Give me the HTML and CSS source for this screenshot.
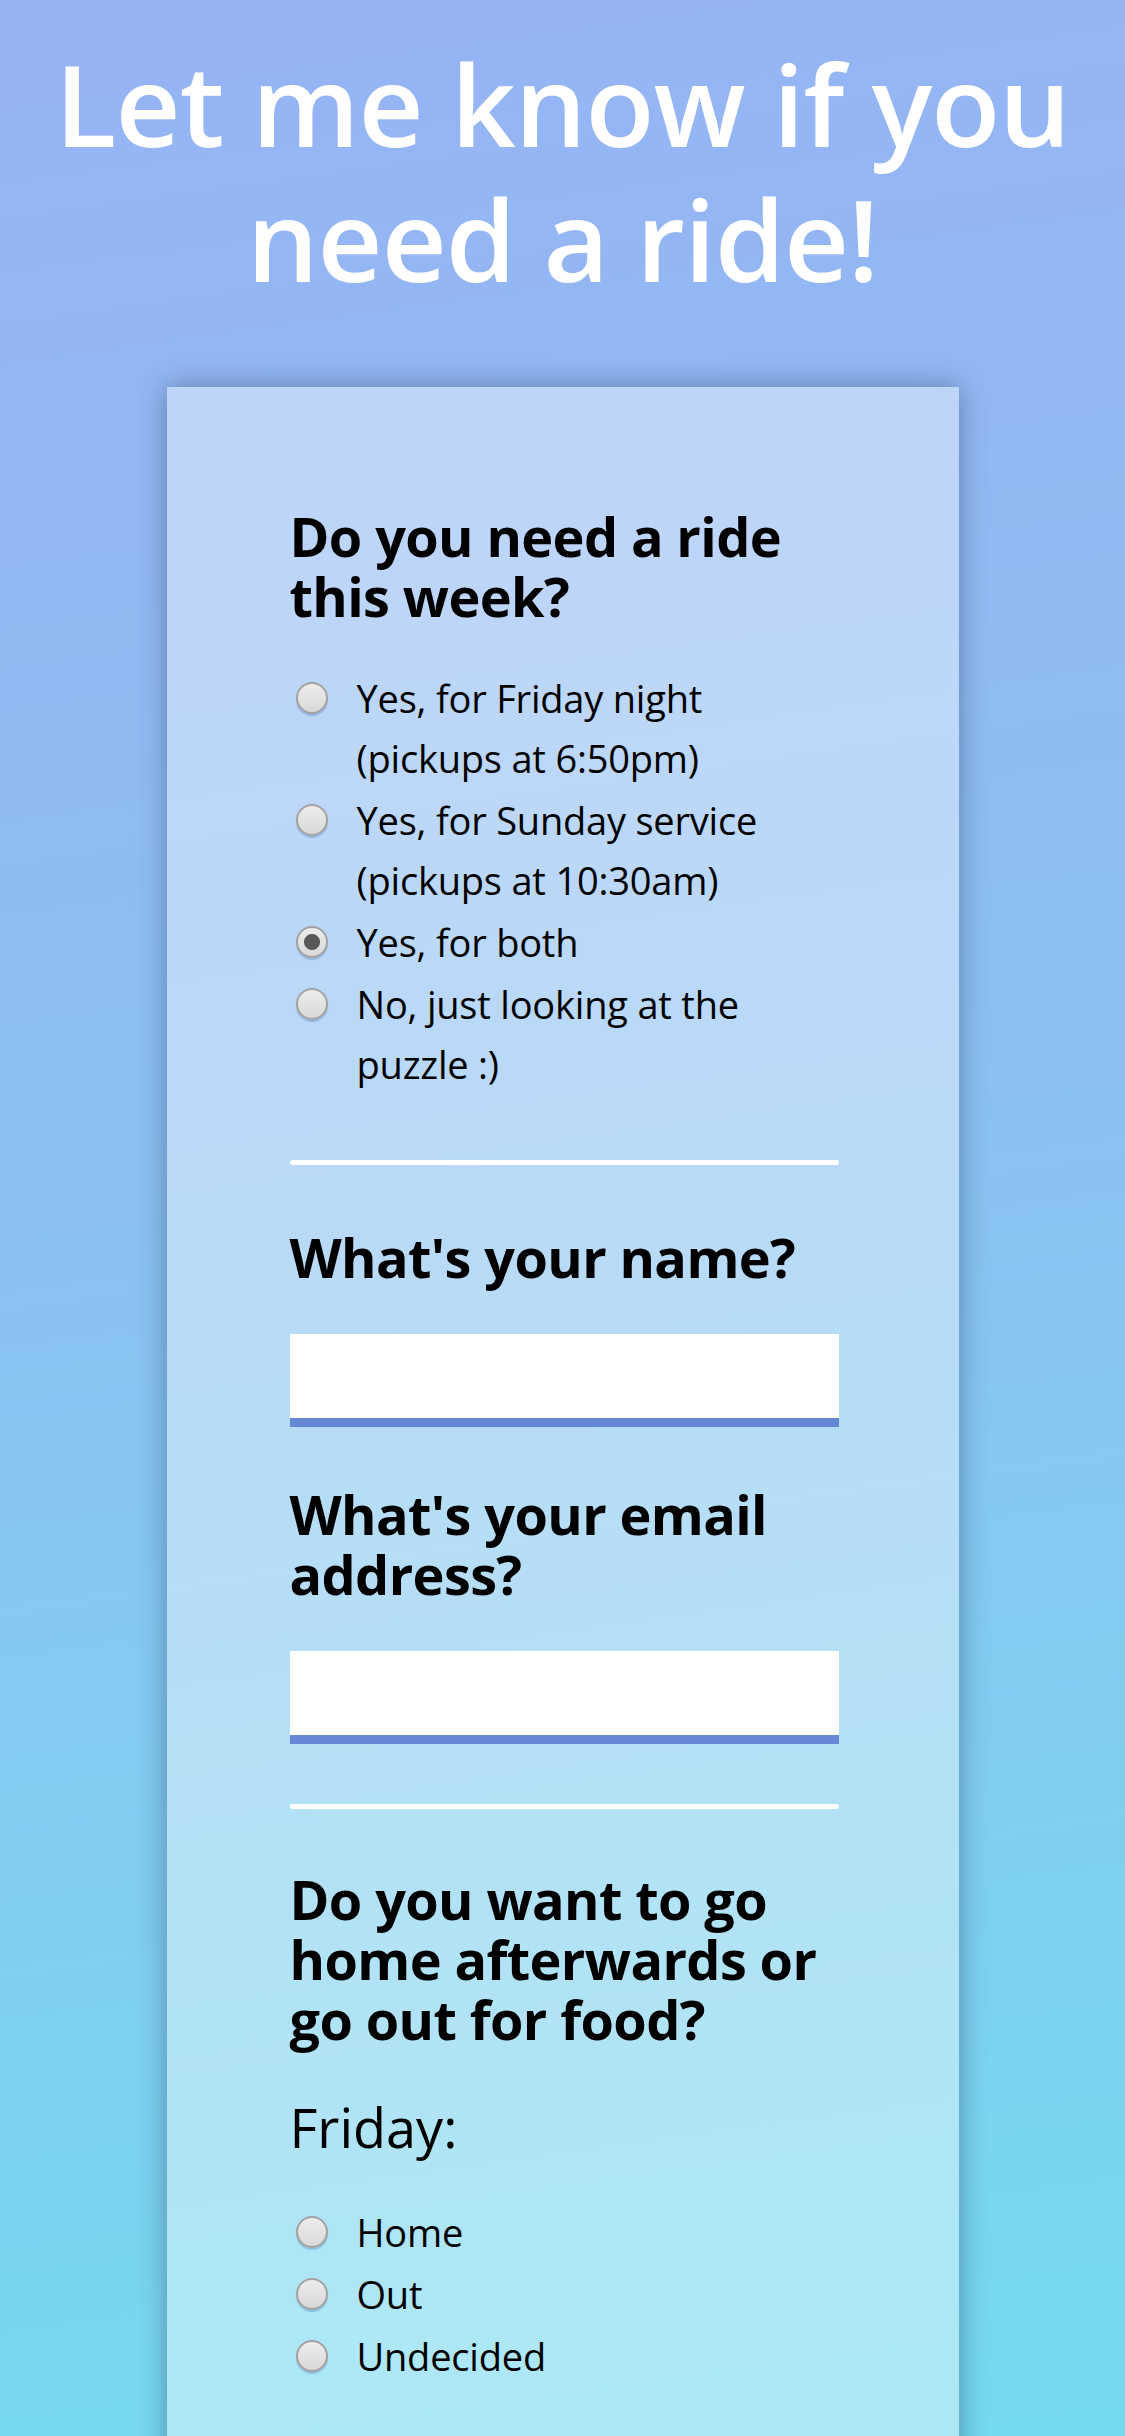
FILE: index.html
```html
<!DOCTYPE html>
<html lang="en">
<head>
<meta charset="utf-8">
<title>Ride form</title>
<link rel="stylesheet" href="styles.css">
</head>
<body>
<h1 class="title">Let me know if you need a ride!</h1>
<form class="card">
  <h2 class="question">Do you need a ride this week?</h2>
  <div class="options">
    <label class="option"><input type="radio" name="ride" class="radio"><span class="option-text">Yes, for Friday night (pickups at 6:50pm)</span></label>
    <label class="option"><input type="radio" name="ride" class="radio"><span class="option-text">Yes, for Sunday service (pickups at 10:30am)</span></label>
    <label class="option"><input type="radio" name="ride" class="radio" checked><span class="option-text">Yes, for both</span></label>
    <label class="option"><input type="radio" name="ride" class="radio"><span class="option-text">No, just looking at the puzzle :)</span></label>
  </div>
  <hr class="divider">
  <h2 class="question q-name">What's your name?</h2>
  <input type="text" class="field" aria-label="Name">
  <h2 class="question q-email">What's your email address?</h2>
  <input type="email" class="field" aria-label="Email">
  <hr class="divider divider-2">
  <h2 class="question q-food">Do you want to go home afterwards or go out for food?</h2>
  <p class="day">Friday:</p>
  <div class="options options-food">
    <label class="option"><input type="radio" name="friday" class="radio"><span class="option-text">Home</span></label>
    <label class="option"><input type="radio" name="friday" class="radio"><span class="option-text">Out</span></label>
    <label class="option"><input type="radio" name="friday" class="radio"><span class="option-text">Undecided</span></label>
  </div>
</form>
</body>
</html>
```
FILE: styles.css
```css
html, body {
  margin: 0;
  padding: 0;
}
body {
  min-height: 2436px;
  background: linear-gradient(172deg, #97b3f4 0%, #8cc0f2 45%, #74dcee 100%);
  font-family: "Open Sans", "Noto Sans", sans-serif;
  color: #000;
  overflow: hidden;
}
.title {
  margin: 36px 0 0;
  font-size: 113px;
  line-height: 135px;
  font-weight: 600;
  color: #fff;
  text-align: center;
  letter-spacing: -1px;
}
.card {
  width: 792px;
  min-height: 2100px;
  box-sizing: border-box;
  margin: 81px auto 0;
  padding: 119px 120px 0 123px;
  background: rgba(255, 255, 255, 0.4);
  box-shadow: 0 0 26px rgba(30, 50, 90, 0.45);
}
.question {
  margin: 0;
  font-size: 54px;
  line-height: 60px;
  font-weight: 700;
  letter-spacing: -0.6px;
}
.options {
  margin-top: 42px;
  display: flex;
  flex-direction: column;
  gap: 2px;
}
.option {
  display: flex;
  align-items: flex-start;
  font-size: 38px;
  line-height: 60px;
  letter-spacing: -0.2px;
}
.radio {
  appearance: none;
  -webkit-appearance: none;
  flex: none;
  width: 32px;
  height: 32px;
  margin: 14px 29px 0 6px;
  border: 2px solid #a2a2a2;
  border-radius: 50%;
  box-sizing: border-box;
  background: linear-gradient(#ececec, #d9d9d9);
  box-shadow: 0 2px 1px rgba(70, 120, 190, 0.35);
}
.radio:checked {
  background: radial-gradient(circle, #585858 0 7.5px, transparent 8.5px), linear-gradient(#ececec, #d9d9d9);
}
.divider {
  margin: 66px 0 0;
  height: 5px;
  border: 0;
  border-radius: 3px;
  background: #fff;
}
.q-name {
  margin-top: 62px;
}
.field {
  display: block;
  width: 100%;
  height: 93px;
  box-sizing: border-box;
  margin: 47px 0 0;
  border: 0;
  border-bottom: 9px solid #6488d5;
  background: #fff;
  border-radius: 0;
}
.q-email {
  margin-top: 57px;
}
.divider-2 {
  margin-top: 60px;
}
.q-food {
  margin-top: 60px;
}
.day {
  margin: 48px 0 0;
  font-size: 54px;
  line-height: 60px;
  font-weight: 400;
}
.options-food {
  margin-top: 45px;
}
```
